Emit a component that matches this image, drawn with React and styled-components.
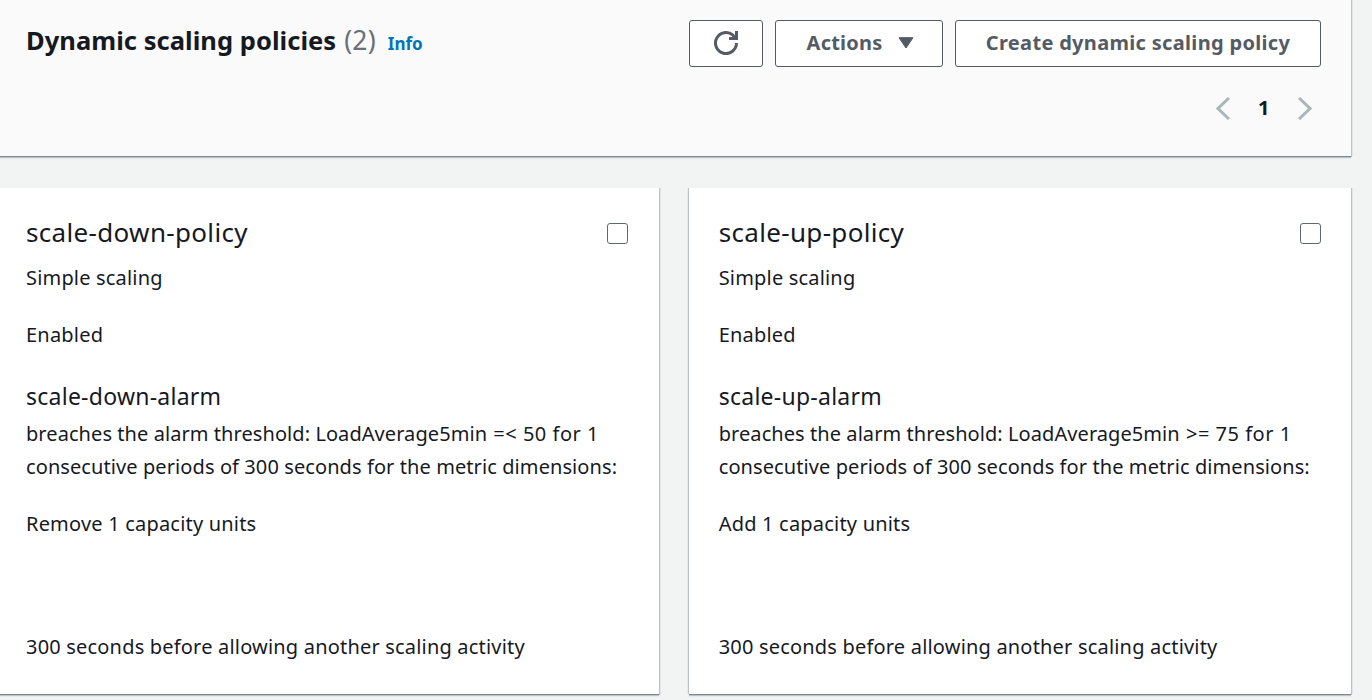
import React from "react";
import styled, { createGlobalStyle } from "styled-components";

const Global = createGlobalStyle`
  * { box-sizing: border-box; }
  body { margin: 0; background: #f2f3f3; overflow: hidden; color: #16191f; font-family: "Noto Sans", sans-serif; }
  h1, h2, h3 { margin: 0; }
`;
const Page = styled.main`
  width: 1372px; height: 700px; overflow: hidden;
`;
const Panel = styled.section`
  box-shadow: 0 1px 0 #7c898e, 1px 0 0 #bcc4c6, -1px 0 0 #bcc4c6, 0 2px 0 #bac3c5, 1px 1px 0 #a9b2b5, 2px 0 0 #e2e5e5, -2px 0 0 #e8ebeb, 0 3px 0 #e8ebeb;
`;
const Header = styled(Panel)`
  width: 1351px; height: 156px; padding: 20px 30px 0 26px;
  display: flex; justify-content: space-between; align-items: flex-start;
  background: #fafafa;
`;
const Line = styled.span`
  display: block; white-space: nowrap;
  font-size: ${p => p.$s || 20}px; line-height: ${p => p.$l || 33}px; letter-spacing: ${p => p.$ls || 0}px;
  font-weight: ${p => p.$b ? 700 : 400}; color: ${p => p.$c || "inherit"};
`;
const Condition = styled.span`
  margin-left: 1px; letter-spacing: 0.5px;
`;
const Heading = styled.div`
  display: flex; align-items: baseline; gap: 8px; padding-top: 2px;
`;
const Info = styled(Line)`
  margin-left: 4px;
`;
const Tools = styled.div`
  display: flex; flex-direction: column; align-items: flex-end; gap: 23px;
`;
const Buttons = styled.div`
  display: flex; gap: 12px;
`;
const Button = styled.button`
  display: flex; align-items: center; justify-content: center; gap: 16px;
  width: ${p => p.$w}px; height: 47px; padding: 0 0 2px ${p => p.$pl || 0}px; border: 1px solid #545b64; border-radius: 3px;
  background: #fff; color: #545b64; font: 700 20px "Noto Sans", sans-serif;
`;
const Pager = styled.nav`
  display: flex; align-items: center; gap: 28.5px; height: 36px; padding-right: 9px;
`;
const PageNumber = styled(Line)`
  padding-bottom: 2px;
`;
const Cards = styled.div`
  display: flex; gap: 30px; padding-top: 32px;
`;
const Card = styled(Panel)`
  width: ${p => p.$w}px; height: 506px; padding: 27px ${p => p.$pr}px 0 ${p => p.$pl}px;
  background: #fff;
`;
const CardTop = styled.div`
  display: flex; justify-content: space-between; align-items: flex-start; height: 34px;
`;
const Check = styled.input`
  appearance: none; width: 21px; height: 21px; margin: 8px 0 0; border: 1px solid #5f6770; border-radius: 3px; background: #fff;
`;
const Block = styled.div`
  margin-top: ${p => p.$mt}px;
`;
const policies = [
  { kind: "down", op: "=< 50", act: "Remove 1 capacity units" },
  { kind: "up", op: ">= 75", act: "Add 1 capacity units" },
];
export default function App() {
  return (
    <Page>
      <Global />
      <Header>
        <Heading>
          <Line as="h1" $s={25.5} $l={36} $ls={0.04} $b>Dynamic scaling policies</Line>
          <Line $s={26.5} $l={36} $ls={0.2} $c="#687078">(2)</Line>
          <Info $s={17} $l={36} $b $c="#0073bb">Info</Info>
        </Heading>
        <Tools>
          <Buttons>
            <Button $w={74} aria-label="Refresh">
              <svg width="24" height="25" viewBox="0 -1 24 25" fill="none" stroke="#545b64" strokeWidth="3"><path d="M22.500 12A10.500 10.500 0 1 1 19 4.200L22 7.500M22.500 0V7.500H15" /></svg>
            </Button>
            <Button $w={168} $pl={3}><Line $ls={0.2} $b>Actions</Line><svg width="16" height="12"><path d="M1 .7H15L8 11Z" fill="#545b64" stroke="#545b64" strokeLinejoin="round" /></svg></Button>
            <Button $w={366}><Line $ls={0.32} $b>Create dynamic scaling policy</Line></Button>
          </Buttons>
          <Pager>
            <svg width="14" height="23" fill="none" stroke="#aab7b8" strokeWidth="3"><path d="M13 1L2 11.500L13 22" /></svg>
            <PageNumber $b>1</PageNumber>
            <svg width="14" height="23" fill="none" stroke="#aab7b8" strokeWidth="3"><path d="M1 1L12 11.500L1 22" /></svg>
          </Pager>
        </Tools>
      </Header>
      <Cards>
        {policies.map(({ kind, op, act }, i) => (
          <Card key={kind} $w={i ? 662 : 659} $pl={i ? 29.7 : 26} $pr={i ? 30 : 31}>
            <CardTop><Line as="h2" $s={26} $l={34} $ls={0.33}>scale-{kind}-policy</Line><Check type="checkbox" /></CardTop>
            <Block $mt={12}><Line $ls={0.18}>Simple scaling</Line></Block>
            <Block $mt={24}><Line $ls={0.2}>Enabled</Line></Block>
            <Block $mt={29}><Line as="h3" $s={23} $ls={0.25}>scale-{kind}-alarm</Line></Block>
            <Block $mt={4}>
              <Line $ls={0.07}>breaches the alarm threshold: LoadAverage5min <Condition>{op} for 1</Condition></Line>
              <Line $ls={0.09}>consecutive periods of 300 seconds for the metric dimensions:</Line>
            </Block>
            <Block $mt={24}><Line $ls={0.2}>{act}</Line></Block>
            <Block $mt={90}><Line $ls={0.19}>300 seconds before allowing another scaling activity</Line></Block>
          </Card>
        ))}
      </Cards>
    </Page>
  );
}
